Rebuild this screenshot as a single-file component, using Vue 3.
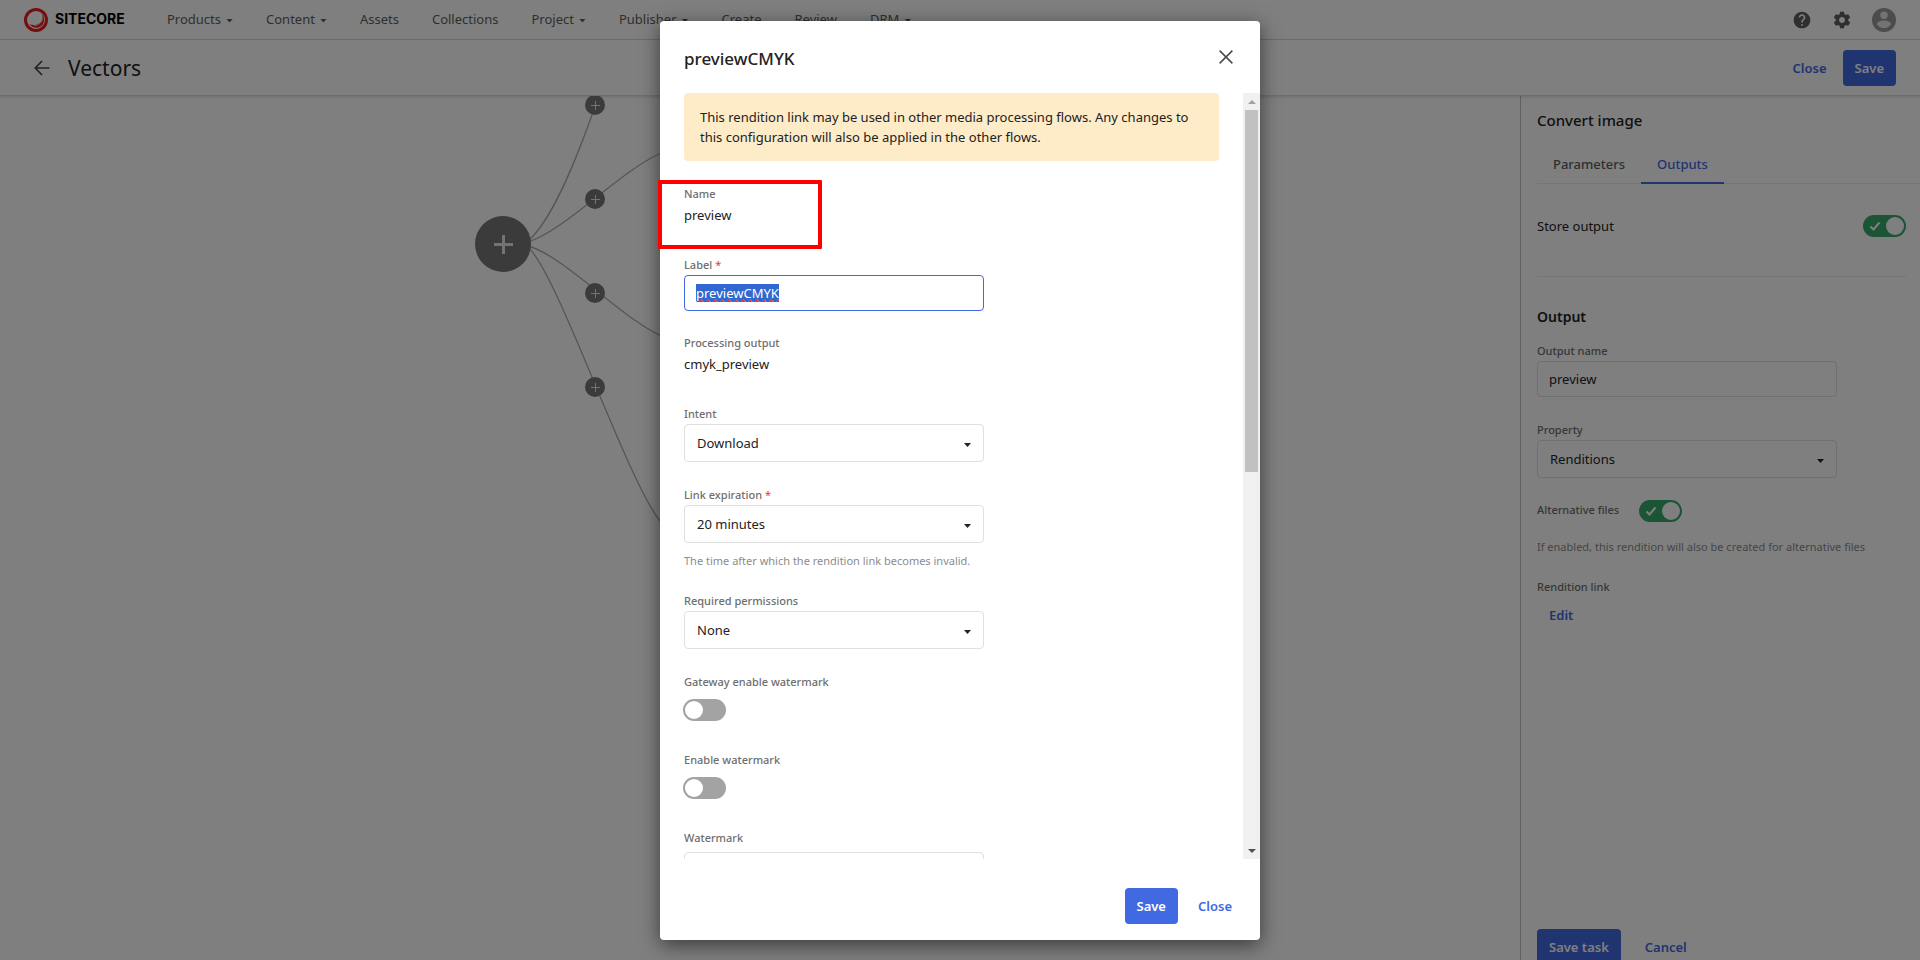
<script setup>
import { onMounted, ref } from 'vue'

const menu = [
  { text: 'Products', drop: true },
  { text: 'Content', drop: true },
  { text: 'Assets', drop: false },
  { text: 'Collections', drop: false },
  { text: 'Project', drop: true },
  { text: 'Publisher', drop: true },
  { text: 'Create', drop: false },
  { text: 'Review', drop: false },
  { text: 'DRM', drop: true }
]

const label = ref('previewCMYK')
const outputName = ref('preview')
const storeOutput = ref(true)
const altFiles = ref(true)
const gatewayWatermark = ref(false)
const enableWatermark = ref(false)
const labelInput = ref(null)

onMounted(() => {
  labelInput.value.focus()
  labelInput.value.select()
})
</script>

<template>
  <div class="app">
    <header class="topbar">
      <a class="brand" href="#" aria-label="Sitecore">
        <svg class="brand-mark" viewBox="0 0 24 24" aria-hidden="true">
          <circle cx="12" cy="12" r="10.500" fill="none" stroke="#eb1f1f" stroke-width="3" />
          <path d="M17.800 5.500c2.200 5-.4 10-6 11.300-2.300.5-4.600.2-6.300-.8 2 3.600 7 5 11 2.600 4.200-2.500 5-8.600 1.300-13.100z" fill="#eb1f1f" />
          <path d="M18.300 10.500c-.2 4-3.700 7-8.300 7.200" fill="none" stroke="#fff" stroke-width=".7" />
        </svg>
        <span class="brand-name">SITECORE</span>
      </a>
      <nav class="menu">
        <a v-for="item in menu" :key="item.text" href="#">
          {{ item.text }}<i v-if="item.drop" class="caret"></i>
        </a>
      </nav>
      <div class="tools">
        <button type="button" aria-label="Help">
          <svg width="20" height="20" viewBox="0 0 24 24"><path fill="#5e5e5e" d="M12 2C6.480 2 2 6.480 2 12s4.480 10 10 10 10-4.480 10-10S17.520 2 12 2zm1 17h-2v-2h2v2zm2.070-7.750l-.9.920C13.450 12.900 13 13.500 13 15h-2v-.5c0-1.100.45-2.100 1.170-2.830l1.240-1.260c.37-.36.59-.86.59-1.410 0-1.100-.9-2-2-2s-2 .9-2 2H8c0-2.210 1.790-4 4-4s4 1.790 4 4c0 .88-.36 1.680-.93 2.250z" /></svg>
        </button>
        <button type="button" aria-label="Settings">
          <svg width="20" height="20" viewBox="0 0 24 24"><path fill="#5e5e5e" d="M19.430 12.980c.04-.32.07-.64.07-.98s-.03-.66-.07-.98l2.110-1.650c.19-.15.24-.42.12-.64l-2-3.460c-.12-.22-.39-.3-.61-.22l-2.490 1c-.52-.4-1.080-.73-1.690-.98l-.38-2.650C14.460 2.180 14.250 2 14 2h-4c-.25 0-.46.18-.49.42l-.38 2.650c-.61.25-1.170.59-1.690.98l-2.490-1c-.23-.09-.49 0-.61.22l-2 3.460c-.13.22-.07.49.12.64l2.110 1.650c-.04.32-.07.65-.07.98s.03.66.07.98l-2.110 1.650c-.19.15-.24.42-.12.64l2 3.460c.12.22.39.3.61.22l2.490-1c.52.4 1.080.73 1.690.98l.38 2.650c.03.24.24.42.49.42h4c.25 0 .46-.18.49-.42l.38-2.650c.61-.25 1.170-.59 1.690-.98l2.490 1c.23.09.49 0 .61-.22l2-3.460c.12-.22.07-.49-.12-.64l-2.110-1.650zM12 15.500c-1.930 0-3.500-1.570-3.500-3.500s1.570-3.500 3.500-3.500 3.500 1.570 3.500 3.500-1.570 3.500-3.500 3.500z" /></svg>
        </button>
        <button class="avatar" type="button" aria-label="Account">
          <svg width="24" height="24" viewBox="0 0 24 24"><circle cx="12" cy="12" r="12" fill="#989898" /><circle cx="12" cy="7.200" r="3.700" fill="#e6e6e6" /><path d="M4.800 16.200c0-2.400 4.800-3.700 7.200-3.700s7.200 1.300 7.200 3.700c-1.500 2.400-4.200 3.900-7.200 3.900s-5.700-1.500-7.200-3.900z" fill="#e6e6e6" /></svg>
        </button>
      </div>
    </header>

    <section class="titlebar">
      <button class="back" type="button" aria-label="Back">
        <svg width="16" height="16" viewBox="0 0 16 16" fill="none" stroke="#4a4a4a" stroke-width="1.700"><path d="M15.500 8H1.500M8 1L1.300 8 8 15" /></svg>
      </button>
      <h1>Vectors</h1>
      <div class="titlebar-actions">
        <button class="btn link" type="button">Close</button>
        <button class="btn primary" type="button">Save</button>
      </div>
    </section>

    <main class="workspace">
      <div class="canvas">
        <svg class="edges" width="700" height="500" viewBox="0 96 700 500" aria-hidden="true">
          <g fill="none" stroke="#acacac" stroke-width="1.300">
            <path d="M528 241C551 221 573 168 592 115L596 105" />
            <path d="M528 242C565 231 625 166 664 152" />
            <path d="M528 246C565 256 625 322 664 337" />
            <path d="M528 247C560 277 628 487 664 526" />
          </g>
        </svg>
        <button class="node big" type="button" aria-label="Add task"></button>
        <button class="node n1" type="button" aria-label="Insert 1"></button>
        <button class="node n2" type="button" aria-label="Insert 2"></button>
        <button class="node n3" type="button" aria-label="Insert 3"></button>
        <button class="node n4" type="button" aria-label="Insert 4"></button>
      </div>

      <aside class="panel">
        <h2>Convert image</h2>
        <div class="tabs" role="tablist">
          <button type="button" role="tab">Parameters</button>
          <button type="button" role="tab" class="active" aria-selected="true">Outputs</button>
        </div>
        <div class="store">
          <label for="store">Store output</label>
          <span class="switch"><input id="store" v-model="storeOutput" type="checkbox" /><svg viewBox="0 0 12 10"><path d="M1.500 5.500l3 3L10.500 1.500" /></svg></span>
        </div>
        <h3>Output</h3>
        <div class="field">
          <label for="oname">Output name</label>
          <input id="oname" v-model="outputName" class="text" type="text" />
        </div>
        <div class="field">
          <label for="prop">Property</label>
          <span class="select"><select id="prop"><option>Renditions</option></select><i class="caret"></i></span>
        </div>
        <div class="alt">
          <label for="alt">Alternative files</label>
          <span class="switch"><input id="alt" v-model="altFiles" type="checkbox" /><svg viewBox="0 0 12 10"><path d="M1.500 5.500l3 3L10.500 1.500" /></svg></span>
        </div>
        <p class="help">If enabled, this rendition will also be created for alternative files</p>
        <span class="caption">Rendition link</span>
        <button class="btn link edit" type="button">Edit</button>
        <div class="panel-actions">
          <button class="btn primary" type="button">Save task</button>
          <button class="btn link" type="button">Cancel</button>
        </div>
      </aside>
    </main>

    <div class="backdrop">
      <div class="modal" role="dialog" aria-modal="true" aria-labelledby="dlg">
        <div class="modal-head">
          <h2 id="dlg">previewCMYK</h2>
          <button type="button" aria-label="Close dialog">
            <svg width="14" height="14" viewBox="0 0 14 14" fill="none" stroke="#4a4a4a" stroke-width="1.500"><path d="M.6.6l12.800 12.800M13.400.6L.6 13.400" /></svg>
          </button>
        </div>
        <div class="modal-body">
          <form class="form" @submit.prevent>
            <p class="alert">This rendition link may be used in other media processing flows. Any changes to this configuration will also be applied in the other flows.</p>
            <div class="field static">
              <span class="caption">Name</span>
              <span class="value">preview</span>
            </div>
            <div class="field">
              <label for="lbl">Label <b>*</b></label>
              <input id="lbl" ref="labelInput" v-model="label" class="text focused" type="text" />
            </div>
            <div class="field static">
              <span class="caption">Processing output</span>
              <span class="value">cmyk_preview</span>
            </div>
            <div class="field">
              <label for="intent">Intent</label>
              <span class="select"><select id="intent"><option>Download</option></select><i class="caret"></i></span>
            </div>
            <div class="field">
              <label for="exp">Link expiration <b>*</b></label>
              <span class="select"><select id="exp"><option>20 minutes</option></select><i class="caret"></i></span>
              <p class="help">The time after which the rendition link becomes invalid.</p>
            </div>
            <div class="field">
              <label for="perm">Required permissions</label>
              <span class="select"><select id="perm"><option>None</option></select><i class="caret"></i></span>
            </div>
            <div class="field toggle">
              <label for="gw">Gateway enable watermark</label>
              <span class="switch"><input id="gw" v-model="gatewayWatermark" type="checkbox" /></span>
            </div>
            <div class="field toggle">
              <label for="ew">Enable watermark</label>
              <span class="switch"><input id="ew" v-model="enableWatermark" type="checkbox" /></span>
            </div>
            <div class="field entity">
              <label for="wm">Watermark</label>
              <span class="select"><select id="wm"></select></span>
            </div>
          </form>
          <div class="scrollbar" aria-hidden="true">
            <i class="arrow up"></i>
            <span class="thumb"></span>
            <i class="arrow down"></i>
          </div>
        </div>
        <div class="modal-foot">
          <button class="btn primary" type="button">Save</button>
          <button class="btn link" type="button">Close</button>
        </div>
        <div class="highlight"></div>
      </div>
    </div>
  </div>
</template>

<style>
body {
  margin: 0;
  overflow: hidden;
}
</style>

<style scoped>
* {
  box-sizing: border-box;
}
.app {
  position: relative;
  display: flex;
  flex-direction: column;
  height: 100vh;
  overflow: hidden;
  background: #fff;
  color: #222;
  font: 13px/20px "Noto Sans", "Open Sans", sans-serif;
}
h1, h2, h3, p {
  margin: 0;
}
button, input, select {
  font: inherit;
  color: inherit;
}
button {
  padding: 0;
  border: 0;
  background: none;
}
a {
  color: inherit;
  text-decoration: none;
}
.caret {
  width: 7px;
  height: 4px;
  background: currentColor;
  clip-path: polygon(0 0, 100% 0, 50% 100%);
}
.topbar {
  display: flex;
  align-items: center;
  height: 40px;
  flex: none;
  padding: 0 24px;
  border-bottom: 1px solid #dcdcdc;
}
.brand {
  display: flex;
  align-items: center;
  gap: 7px;
  width: 143px;
}
.brand-mark {
  width: 24px;
  height: 24px;
}
.brand-name {
  padding-bottom: 2px;
  color: #000;
  font-family: Inter, sans-serif;
  font-size: 14px;
  font-weight: 700;
}
.menu {
  display: flex;
  gap: 33px;
  padding-bottom: 2px;
  color: #5e5e5e;
}
.menu a {
  display: flex;
  align-items: center;
  gap: 5px;
}
.menu .caret {
  margin-top: 4px;
}
.tools {
  display: flex;
  align-items: center;
  gap: 20px;
  margin-left: auto;
}
.tools button {
  display: flex;
}
.btn {
  height: 36px;
  border-radius: 4px;
  font-weight: 600;
  color: #4169e1;
}
.btn.primary {
  padding: 0 12px;
  background: #4169e1;
  color: #fff;
}
.titlebar {
  position: relative;
  display: flex;
  align-items: center;
  flex: none;
  height: 56px;
  padding: 0 24px 0 34px;
  border-bottom: 1px solid #dcdcdc;
  box-shadow: 0 1px 3px rgba(0, 0, 0, .15);
}
.back {
  display: flex;
}
h1 {
  margin-left: 18px;
  font-size: 21px;
  font-weight: 400;
  line-height: 28px;
}
.titlebar-actions {
  display: flex;
  gap: 16px;
  margin-left: auto;
}
.workspace {
  display: flex;
  flex: 1;
  min-height: 0;
}
.canvas {
  position: relative;
  flex: 1;
  overflow: hidden;
}
.edges {
  position: absolute;
  left: 0;
  top: 0;
}
.node {
  position: absolute;
  left: 585px;
  width: 20px;
  height: 20px;
  border-radius: 50%;
  background:
    linear-gradient(#e6e6e6, #e6e6e6) center / 9px 1px no-repeat,
    linear-gradient(#e6e6e6, #e6e6e6) center / 1px 9px no-repeat,
    #767676;
}
.node.big {
  left: 475px;
  top: 120px;
  width: 56px;
  height: 56px;
  background:
    linear-gradient(#e6e6e6, #e6e6e6) center / 19px 3px no-repeat,
    linear-gradient(#e6e6e6, #e6e6e6) center / 3px 19px no-repeat,
    #767676;
}
.n1 { top: -1px; }
.n2 { top: 93px; }
.n3 { top: 187px; }
.n4 { top: 281px; }
.panel {
  display: flex;
  flex-direction: column;
  width: 400px;
  padding-left: 16px;
  border-left: 1px solid #c4c4c4;
}
.panel h2 {
  margin-top: 12px;
  font-size: 15px;
  font-weight: 500;
  line-height: 24px;
}
.tabs {
  display: flex;
  margin-top: 13px;
  border-bottom: 1px solid #eaeaea;
}
.tabs button {
  height: 38px;
  padding: 0 16px;
  color: #5e5e5e;
  font-weight: 500;
}
.tabs .active {
  height: 39px;
  margin-bottom: -1px;
  border-bottom: 2px solid #4169e1;
  color: #4169e1;
}
.store {
  display: flex;
  align-items: center;
  justify-content: space-between;
  height: 93px;
  margin-right: 14px;
  padding-bottom: 8px;
  border-bottom: 1px solid #eaeaea;
}
h3 {
  margin-top: 30px;
  font-size: 14px;
  font-weight: 600;
  line-height: 20px;
}
.field {
  display: flex;
  flex-direction: column;
  width: 300px;
  margin-bottom: 25px;
}
.field label, .caption, .alt label {
  margin-bottom: 2px;
  color: #6e6e6e;
  font-size: 11px;
  font-weight: 500;
  line-height: 16px;
}
.field b {
  color: #e53935;
  font-weight: 400;
}
.text {
  height: 36px;
  padding: 0 11px;
  border: 1px solid #e0e0e0;
  border-radius: 4px;
  background: #fff;
  outline: 0;
}
.focused {
  border-color: #4169e1;
  text-decoration: underline wavy #e81123 1px;
  text-decoration-skip-ink: none;
}
.focused::selection {
  background: #3067d1;
  color: #fff;
  text-decoration: underline wavy #e81123 1px;
}
.select {
  position: relative;
  display: flex;
}
.select select {
  width: 100%;
  height: 38px;
  padding: 0 12px;
  border: 1px solid #e0e0e0;
  border-radius: 4px;
  background: #fff;
  appearance: none;
}
.select .caret {
  position: absolute;
  right: 13px;
  top: 19px;
}
.panel h3 + .field {
  margin-top: 16px;
}
.alt {
  display: flex;
  align-items: center;
  gap: 20px;
  margin-top: -3px;
}
.help {
  color: #8c8c8c;
  font-size: 11px;
  line-height: 18px;
}
.panel .help {
  margin: 16px 0 23px;
}
.edit {
  align-self: flex-start;
  margin-left: 12px;
}
.panel-actions {
  display: flex;
  gap: 24px;
  margin-top: auto;
  margin-bottom: -5px;
}
.switch {
  position: relative;
  display: flex;
  width: 43px;
}
.switch input {
  width: 43px;
  height: 22px;
  margin: 0;
  border-radius: 11px;
  background: #a3a3a3;
  appearance: none;
}
.switch input::before {
  content: "";
  display: block;
  width: 18px;
  height: 18px;
  margin: 2px;
  border-radius: 50%;
  background: #fff;
}
.switch input:checked {
  background: #38aa6c;
}
.switch input:checked::before {
  margin-left: 23px;
}
.switch svg {
  position: absolute;
  left: 6px;
  top: 6px;
  width: 12px;
  height: 10px;
  fill: none;
  stroke: #fff;
  stroke-width: 2;
}
.backdrop {
  position: absolute;
  inset: 0;
  display: flex;
  justify-content: center;
  padding: 21px 0 20px;
  background: rgba(0, 0, 0, .5);
}
.modal {
  position: relative;
  display: flex;
  flex-direction: column;
  width: 600px;
  border-radius: 4px;
  background: #fff;
  box-shadow: 0 5px 20px rgba(0, 0, 0, .55);
}
.modal-head {
  display: flex;
  align-items: center;
  justify-content: space-between;
  flex: none;
  height: 72px;
  padding: 3px 27px 0 24px;
}
.modal-head h2 {
  font-size: 17px;
  font-weight: 500;
  line-height: 24px;
}
.modal-body {
  display: flex;
  flex: 1;
  min-height: 0;
}
.form {
  flex: 1;
  padding: 0 24px;
  overflow: hidden;
}
.alert {
  margin-bottom: 25px;
  padding: 14px 16px;
  border-radius: 4px;
  background: #feebc8;
}
.form .text {
  margin-bottom: -1px;
}
.static {
  margin-bottom: 32px;
}
.value {
  margin-top: 1px;
}
.field .help {
  margin-top: 9px;
  margin-bottom: -2px;
}
.toggle {
  margin-bottom: 31px;
}
.toggle .switch {
  margin: 7px 0 0 -1px;
}
.entity {
  gap: 4px;
}
.scrollbar {
  display: flex;
  flex-direction: column;
  align-items: center;
  width: 17px;
  background: #f0f0f0;
}
.arrow {
  margin: 7px 0 6px;
  border: 4px solid transparent;
}
.up {
  border-top: 0;
  border-bottom-color: #a0a0a0;
}
.down {
  margin-top: auto;
  border-bottom: 0;
  border-top-color: #505050;
}
.thumb {
  width: 13px;
  height: 47.3%;
  background: #c1c1c1;
}
.modal-foot {
  display: flex;
  align-items: center;
  justify-content: flex-end;
  gap: 20px;
  flex: none;
  height: 81px;
  padding: 12px 28px 0 0;
}
.highlight {
  position: absolute;
  left: -2px;
  top: 159px;
  width: 164px;
  height: 69px;
  border: 4px solid #f00;
  border-radius: 1px;
}
</style>
